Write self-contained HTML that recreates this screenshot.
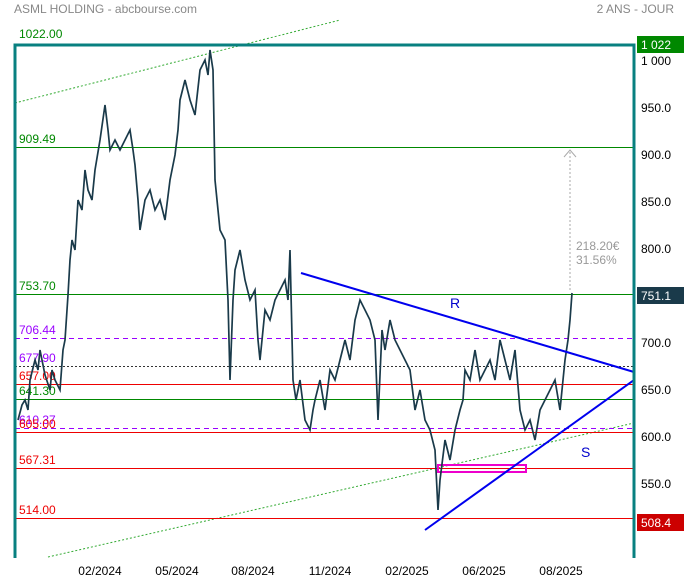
<!DOCTYPE html><html><head><style>body{margin:0;background:#fff;font-family:"Liberation Sans",sans-serif}</style></head><body>
<svg width="684" height="580" xmlns="http://www.w3.org/2000/svg" font-family="Liberation Sans, sans-serif">
<text x="14" y="13" font-size="12" fill="#888">ASML HOLDING - abcbourse.com</text>
<text x="674" y="13" font-size="12" fill="#888" text-anchor="end">2 ANS - JOUR</text>
<line x1="15" y1="103" x2="340" y2="20" stroke="#3a3" stroke-dasharray="2,2"/>
<line x1="48" y1="557" x2="634" y2="423" stroke="#3a3" stroke-dasharray="2,2"/>
<g shape-rendering="crispEdges">
<line x1="15" y1="147.5" x2="634" y2="147.5" stroke="#080"/>
<line x1="15" y1="294.5" x2="634" y2="294.5" stroke="#080"/>
<line x1="15" y1="338.5" x2="634" y2="338.5" stroke="#90f" stroke-dasharray="5,4"/>
<line x1="15" y1="366.5" x2="634" y2="366.5" stroke="#333" stroke-dasharray="2,2"/>
<line x1="15" y1="384.5" x2="634" y2="384.5" stroke="#e00"/>
<line x1="15" y1="399.5" x2="634" y2="399.5" stroke="#080"/>
<line x1="15" y1="428.5" x2="634" y2="428.5" stroke="#90f" stroke-dasharray="5,4"/>
<line x1="15" y1="432.5" x2="634" y2="432.5" stroke="#e00"/>
<line x1="15" y1="468.5" x2="634" y2="468.5" stroke="#e00"/>
<line x1="15" y1="518.5" x2="634" y2="518.5" stroke="#e00"/>
</g>
<g font-size="12">
<text x="19" y="38" fill="#080">1022.00</text>
<text x="19" y="143" fill="#080">909.49</text>
<text x="19" y="290" fill="#080">753.70</text>
<text x="19" y="334" fill="#90f">706.44</text>
<text x="19" y="362" fill="#90f">677.90</text>
<text x="19" y="380" fill="#e00">657.00</text>
<text x="19" y="395" fill="#080">641.30</text>
<text x="19" y="424" fill="#90f">610.37</text>
<text x="19" y="428" fill="#e00">605.00</text>
<text x="19" y="464" fill="#e00">567.31</text>
<text x="19" y="514" fill="#e00">514.00</text>
</g>
<rect x="438" y="465" width="88" height="7" fill="none" stroke="#e0c" stroke-width="2"/>
<polyline fill="none" stroke="#1a3a4a" stroke-width="1.7" points="18,420 22,405 25,400 28,410 30,380 35,360 38,370 40,350 45,375 50,390 52,370 55,380 60,390 63,350 65,340 68,295 70,260 72,240 75,250 78,200 82,210 85,170 88,190 92,200 95,170 100,140 105,105 108,130 110,150 115,140 120,150 125,140 130,130 133,150 135,165 138,200 140,230 145,200 150,190 155,210 160,200 165,220 170,180 175,155 178,130 180,100 185,80 190,100 195,115 200,70 205,60 208,75 210,50 213,70 215,180 220,230 225,240 228,300 230,380 233,300 235,270 240,250 245,280 250,300 255,290 258,340 260,360 265,310 270,320 275,300 280,290 285,280 288,300 290,250 293,380 296,400 300,380 305,420 310,430 313,410 315,400 320,380 325,410 330,370 335,380 340,360 345,340 350,360 355,320 360,300 365,310 370,320 375,340 378,420 382,330 385,350 390,320 395,340 400,350 405,360 410,370 415,410 420,390 425,420 430,430 435,450 438,510 440,480 445,440 450,460 455,430 460,410 463,400 465,370 470,380 475,350 480,380 485,370 490,360 495,380 500,340 505,360 510,380 515,350 520,410 525,430 530,420 535,440 540,410 545,400 550,390 555,380 560,410 565,360 568,340 570,320 572,293"/>
<line x1="301" y1="273" x2="634" y2="372" stroke="#00e" stroke-width="2"/>
<line x1="425" y1="530" x2="634" y2="380" stroke="#00e" stroke-width="2"/>
<text x="450" y="308" font-size="14" fill="#00c">R</text>
<text x="581" y="457" font-size="14" fill="#00c">S</text>
<line x1="570" y1="152" x2="570" y2="292" stroke="#aaa" stroke-dasharray="2,2"/>
<polyline points="564,157 570,150 576,157" fill="none" stroke="#aaa"/>
<text x="576" y="250" font-size="12" fill="#999">218.20€</text>
<text x="576" y="264" font-size="12" fill="#999">31.56%</text>
<path d="M15,558V45H634V558" fill="none" stroke="#088080" stroke-width="3"/>
<rect x="637" y="36" width="47" height="17" fill="#080"/>
<text x="641" y="49" font-size="12" fill="#fff">1 022</text>
<g font-size="12" fill="#000">
<text x="641" y="65">1 000</text>
<text x="641" y="112">950.0</text>
<text x="641" y="159">900.0</text>
<text x="641" y="206">850.0</text>
<text x="641" y="253">800.0</text>
<text x="641" y="347">700.0</text>
<text x="641" y="394">650.0</text>
<text x="641" y="441">600.0</text>
<text x="641" y="488">550.0</text>
</g>
<rect x="637" y="287" width="47" height="17" fill="#1a3a4a"/>
<text x="641" y="300" font-size="12" fill="#fff">751.1</text>
<rect x="637" y="514" width="47" height="17" fill="#c00"/>
<text x="641" y="527" font-size="12" fill="#fff">508.4</text>
<g font-size="12" fill="#000" text-anchor="middle">
<text x="100" y="575">02/2024</text>
<text x="177" y="575">05/2024</text>
<text x="253" y="575">08/2024</text>
<text x="330" y="575">11/2024</text>
<text x="407" y="575">02/2025</text>
<text x="484" y="575">06/2025</text>
<text x="561" y="575">08/2025</text>
</g>
</svg></body></html>
